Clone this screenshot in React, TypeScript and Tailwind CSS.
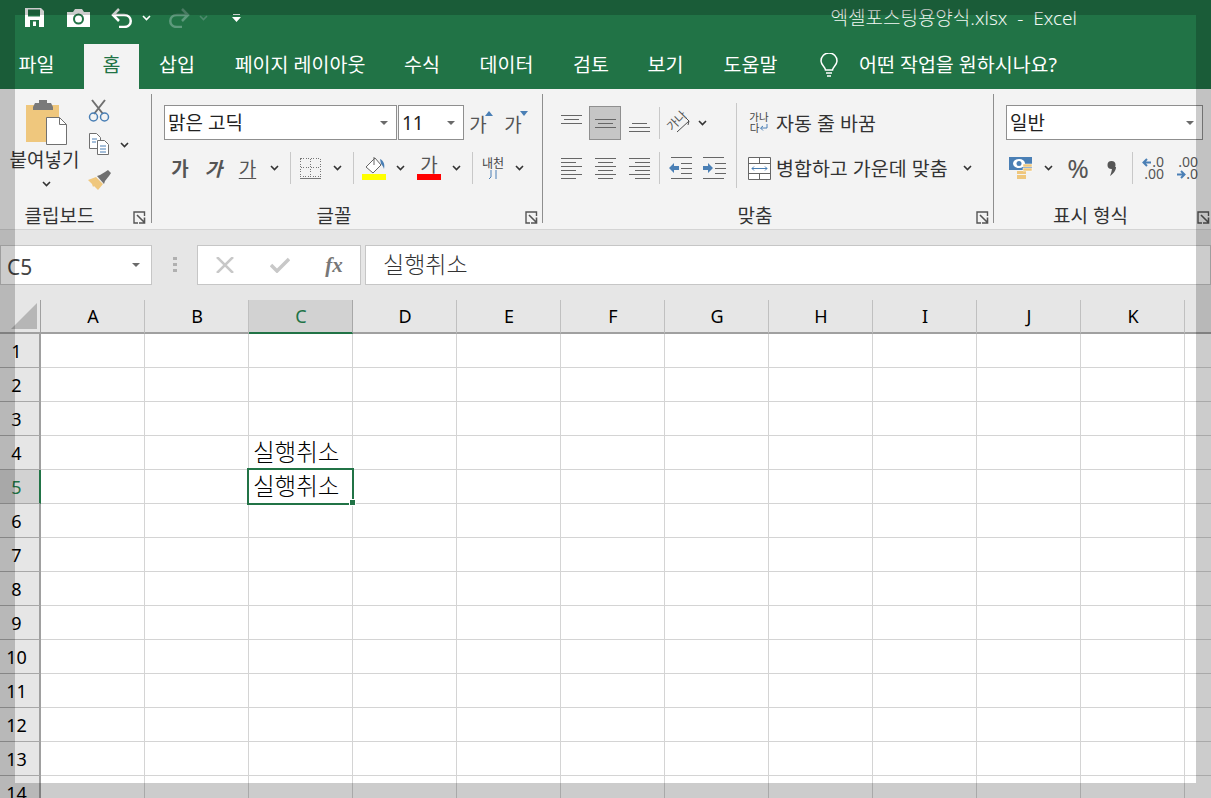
import React from "react";

const font = { fontFamily: '"Noto Sans","Noto Sans CJK KR",sans-serif' };

const Chev = ({ c = "#333" }: { c?: string }) => (
  <svg width="9" height="6" viewBox="0 0 9 6" fill="none" stroke={c} strokeWidth="1.600">
    <path d="M1 1l3.500 3.500L8 1" />
  </svg>
);
const Caret = () => (
  <svg width="8" height="4" viewBox="0 0 8 4" fill="#6a6a6a"><path d="M0 0h8L4 4z" /></svg>
);
const Launcher = () => (
  <svg width="13" height="13" viewBox="0 0 13 13" fill="none" stroke="#555">
    <path d="M11.500 5V1H1v11h4" strokeWidth="1.400" />
    <path d="M4 4l7 7M11.500 6.500v5.500H6" strokeWidth="1.600" />
  </svg>
);
const JustifyLines = ({ align }: { align: "l" | "c" | "r" }) => (
  <svg width="21" height="22" viewBox="0 0 21 22" stroke="#666" strokeWidth="1" shapeRendering="crispEdges">
    {[0, 1, 2, 3, 4, 5].map((i) => {
      const w = i % 2 ? 15 : 21;
      const left = align === "l" ? 0 : align === "c" ? (21 - w) / 2 : 21 - w;
      return <path key={i} d={`M${left} ${1.5 + i * 4}h${w}`} />;
    })}
  </svg>
);
const V3 = ({ h = "h-[32px]" }: { h?: string }) => <div className={`w-px ${h} bg-[#c8c8c8]`} />;

function Tab({ w, t, active }: { w: string; t: string; active?: boolean }) {
  return (
    <div
      className={`${w} h-full flex items-center justify-center text-[19.5px] whitespace-nowrap pb-[3px] ${
        active ? "bg-[#f3f3f3] text-[#217346]" : "text-white"
      }`}
    >
      {t}
    </div>
  );
}

function GroupLabel({ t, pad, launcherPos }: { t: string; pad: string; launcherPos: string }) {
  return (
    <div className={`relative h-[20px] mt-auto mb-[3px] flex items-center justify-center text-[19px] text-[#333] whitespace-nowrap ${pad}`}>
      {t}
      <span className={`absolute top-[5px] flex ${launcherPos}`}>
        <Launcher />
      </span>
    </div>
  );
}

const Sep = () => <div className="w-px h-[129px] mt-[5px] bg-[#8e8e8e] shrink-0" />;

function Select({ w, t }: { w: string; t: string }) {
  return (
    <div className={`${w} h-[35px] bg-white border border-[#8f8f8f] flex items-center justify-between pl-[3px] pr-[8px] text-[19px] text-[#222]`}>
      <span className="pt-[2px]">{t}</span>
      <Caret />
    </div>
  );
}

const Ga = ({ cls = "" }: { cls?: string }) => (
  <span className={`text-[19px] leading-none text-[#555] pt-[2px] ${cls}`}>가</span>
);

function Clipboard() {
  return (
    <div className="w-[151px] shrink-0 flex flex-col h-full">
      <div className="flex">
        <div className="w-[88px] flex flex-col items-center pt-[11px] pl-[1px]">
          <svg className="ml-[5px]" width="42" height="46" viewBox="0 0 42 46">
            <path d="M0 5h33v37H0z" fill="#efc77d" />
            <path d="M7 7l2-4h4V0h8v3h4l2 4v3H7z" fill="#7a7a7a" />
            <path d="M20.500 17.500h13l7 7V44.500H20.500z" fill="#fff" stroke="#707070" />
            <path d="M33.500 17.500v7h7" fill="none" stroke="#707070" />
          </svg>
          <div className="text-[19px] leading-none mt-[5px] whitespace-nowrap text-[#333]">붙여넣기</div>
          <div className="mt-[11px] ml-[3px] flex"><Chev /></div>
        </div>
        <div className="flex flex-col pt-[10px]">
          <svg width="22" height="24" viewBox="0 0 22 24" fill="none">
            <path d="M4 1l11 14M17 1L6 15" stroke="#707070" strokeWidth="2" />
            <circle cx="5.500" cy="18" r="4" stroke="#4a7fb5" strokeWidth="1.500" />
            <circle cx="16.500" cy="18" r="4" stroke="#4a7fb5" strokeWidth="1.500" />
          </svg>
          <div className="flex items-center mt-[10px]">
            <svg width="22" height="23" viewBox="0 0 22 23" fill="#fff" stroke="#707070">
              <path d="M1.500.500h7l4 4v11h-11z" />
              <path d="M9.500 7.500h7l4 4v10h-11z" />
              <path d="M4 6h5M4 9h4M12 13h6M12 16h6M12 19h6" stroke="#4a7fb5" />
            </svg>
            <span className="ml-[10px] flex"><Chev /></span>
          </div>
          <svg className="mt-[14px]" width="24" height="21" viewBox="0 0 24 21">
            <path d="M0 10l8-3 7 7-5 6-4-4-1 1-1-3z" fill="#efc77d" />
            <path d="M9 6l3-1 5-3 3-2 3 3-2 3-4 5-1 3z" fill="#707070" />
          </svg>
        </div>
      </div>
      <GroupLabel t="클립보드" pad="pr-[32px]" launcherPos="right-[5px]" />
    </div>
  );
}

function FontGroup() {
  return (
    <div className="w-[390px] shrink-0 flex flex-col h-full pt-[16px]">
      <div className="flex items-center h-[35px] pl-[12px]">
        <Select w="w-[233px]" t="맑은 고딕" />
        <div className="ml-px"><Select w="w-[66px]" t="11" /></div>
        <div className="w-[30px] h-[35px] flex items-center justify-center relative pr-[2px] pt-[3px]">
          <Ga />
          <svg className="absolute right-[1px] top-[6px]" width="8" height="5"><path d="M0 5L4 0l4 5z" fill="#4a7fb5" /></svg>
        </div>
        <div className="w-[40px] h-[35px] flex items-center justify-center relative pr-[2px] pt-[3px]">
          <Ga />
          <svg className="absolute right-[6px] top-[6px]" width="8" height="5"><path d="M0 0l4 5 4-5z" fill="#4a7fb5" /></svg>
        </div>
      </div>
      <div className="flex items-center h-[34px] mt-[11px] pl-[12px]">
        <div className="w-[32px] flex justify-center"><Ga cls="font-semibold" /></div>
        <div className="w-[35px] flex justify-center"><Ga cls="font-semibold italic" /></div>
        <div className="w-[33px] flex justify-center"><Ga cls="font-normal underline underline-offset-2" /></div>
        <div className="w-[20px] flex justify-center"><Chev /></div>
        <div className="w-[12px] flex justify-center"><V3 /></div>
        <div className="w-[30px] flex justify-center">
          <svg width="22" height="21" viewBox="0 0 22 21" fill="none" stroke="#777" shapeRendering="crispEdges">
            <path d="M.500.500h20v18h-20zM10.500.500v18M.500 9.500h20" strokeDasharray="1 1.500" />
            <path d="M0 20.500h21" />
          </svg>
        </div>
        <div className="w-[22px] flex justify-center"><Chev /></div>
        <div className="w-[10px] flex justify-center"><V3 /></div>
        <div className="w-[32px] flex justify-center">
          <svg width="24" height="24" viewBox="0 0 24 24">
            <path d="M4 11l9-9 6 7-8 8z" fill="#fff" stroke="#666" />
            <path d="M12 1v8" stroke="#666" />
            <path d="M18 3c4 2 5 6 4 10-1-3-2-4-3-5z" fill="#4a7fb5" />
            <path d="M0 18h24v6H0z" fill="#ffff00" />
          </svg>
        </div>
        <div className="w-[20px] flex justify-center"><Chev /></div>
        <div className="w-[38px] flex flex-col items-center">
          <span className="text-[19px] leading-[18px] text-[#555]">가</span>
          <div className="w-[24px] h-[6px] bg-[#ff0000]" />
        </div>
        <div className="w-[16px] flex justify-center"><Chev /></div>
        <div className="w-[16px] flex justify-center"><V3 /></div>
        <div className="w-[26px] flex flex-col items-center leading-none text-[#444]">
          <span className="text-[12px] whitespace-nowrap">내천</span>
          <svg width="10" height="9" viewBox="0 0 10 9" stroke="#4a7fb5" fill="none"><path d="M3 0v7l-2 2M8 0v9" /></svg>
        </div>
        <div className="w-[26px] flex justify-center"><Chev /></div>
      </div>
      <GroupLabel t="글꼴" pad="pr-[26px]" launcherPos="right-[4px]" />
    </div>
  );
}

function AlignGroup() {
  return (
    <div className="w-[450px] shrink-0 flex flex-col h-full pt-[16px]">
      <div className="flex h-[85px] pl-[12px]">
        <div className="flex flex-col">
          <div className="flex items-center h-[35px]">
            <div className="w-[32px] flex justify-center pb-[7px]">
              <svg width="21" height="9" stroke="#666" shapeRendering="crispEdges"><path d="M0 .5h21M3 4.500h15M0 8.500h21" /></svg>
            </div>
            <div className="w-[32px] h-[34px] mt-px ml-[2px] bg-[#c6c6c6] border border-[#8f8f8f] flex items-center justify-center">
              <svg width="21" height="9" stroke="#666" shapeRendering="crispEdges"><path d="M0 .5h21M3 4.500h15M0 8.500h21" /></svg>
            </div>
            <div className="w-[32px] ml-[2px] flex justify-center pt-[9px]">
              <svg width="21" height="9" stroke="#666" shapeRendering="crispEdges"><path d="M3 .5h15M0 4.500h21M0 8.500h21" /></svg>
            </div>
            <div className="w-[8px] flex justify-center"><V3 /></div>
            <div className="w-[32px] flex justify-center">
              <div className="relative w-[24px] h-[24px]">
                <span className="absolute left-[-1px] top-[4px] text-[12px] leading-none text-[#555] -rotate-45 whitespace-nowrap">가나</span>
                <svg className="absolute left-0 top-0" width="24" height="24" fill="none" stroke="#4d4d4d"><path d="M10 21l12-11M19 7l3 3-1 4" /></svg>
              </div>
            </div>
            <div className="w-[14px] flex justify-center"><Chev /></div>
          </div>
          <div className="flex items-center h-[34px] mt-[11px]">
            <div className="w-[32px] flex justify-center"><JustifyLines align="l" /></div>
            <div className="w-[32px] ml-[2px] flex justify-center"><JustifyLines align="c" /></div>
            <div className="w-[32px] ml-[2px] flex justify-center"><JustifyLines align="r" /></div>
            <div className="w-[8px] flex justify-center"><V3 /></div>
            <div className="w-[32px] ml-px flex justify-center">
              <svg width="23" height="22" viewBox="0 0 23 22">
                <path d="M2 .5h21M12 6.500h11M12 11.500h11M12 16.500h11M2 21.500h21" stroke="#666" />
                <path d="M0 11l5-5v3h5v4H5v3z" fill="#4a7fb5" />
              </svg>
            </div>
            <div className="w-[32px] ml-[2px] flex justify-center">
              <svg width="23" height="22" viewBox="0 0 23 22">
                <path d="M0 .5h21M12 6.500h11M12 11.500h11M12 16.500h11M0 21.500h21" stroke="#666" />
                <path d="M10 11L5 6v3H0v4h5v3z" fill="#4a7fb5" />
              </svg>
            </div>
          </div>
        </div>
        <div className="ml-[6px] w-px h-[85px] mt-[-2px] bg-[#c8c8c8] shrink-0" />
        <div className="flex flex-col ml-[8px]">
          <div className="flex items-center h-[35px]">
            <div className="w-[28px] flex flex-col items-center leading-none text-[#444]">
              <span className="text-[10.500px] leading-[11px] whitespace-nowrap">가나</span>
              <span className="flex items-center text-[10.500px] leading-[10px] whitespace-nowrap">다
                <svg width="9" height="8" fill="none" stroke="#4a7fb5"><path d="M8 0v4H2M4 2L1.500 4 4 6.500" /></svg>
              </span>
            </div>
            <span className="ml-[3px] pt-[2px] text-[19.5px] whitespace-nowrap text-[#333]">자동 줄 바꿈</span>
          </div>
          <div className="flex items-center h-[34px] mt-[11px]">
            <div className="w-[28px] flex justify-center">
              <svg width="23" height="23" viewBox="0 0 23 23" fill="none">
                <path d="M.5.5h22v22H.5z" fill="#fff" stroke="#666" />
                <path d="M.5 6.500h22M.5 16.500h22M11.500.5v6M11.500 16.500v6" stroke="#666" />
                <path d="M4 11.500h15M6 9.500l-2 2 2 2M17 9.500l2 2-2 2" stroke="#4a7fb5" />
              </svg>
            </div>
            <span className="ml-[3px] pt-[2px] text-[19.5px] whitespace-nowrap text-[#333]">병합하고 가운데 맞춤</span>
            <span className="ml-[15px] flex"><Chev /></span>
          </div>
        </div>
      </div>
      <GroupLabel t="맞춤" pad="pr-[26px]" launcherPos="right-[4px]" />
    </div>
  );
}

function NumberGroup() {
  return (
    <div className="flex-1 flex flex-col h-full pt-[16px]">
      <div className="h-[35px] pl-[12px]"><Select w="w-[197px]" t="일반" /></div>
      <div className="flex items-center h-[34px] mt-[11px] pl-[10px]">
        <div className="w-[34px] flex justify-center">
          <svg width="24" height="23" viewBox="0 0 24 23">
            <path d="M0 0h23v13H0z" fill="#4a7fb5" />
            <ellipse cx="10" cy="6.500" rx="6" ry="4.500" fill="#fff" />
            <circle cx="10" cy="6.500" r="2.500" fill="#4a7fb5" />
            <path d="M8 14h9v3H8zM8 18h9v4H8z" fill="#efc77d" />
            <path d="M14 7h9v3h-9zM14 11h9v3h-9z" fill="#efc77d" stroke="#fff" strokeWidth=".5" />
          </svg>
        </div>
        <div className="w-[20px] flex justify-center"><Chev /></div>
        <div className="w-[40px] flex justify-center text-[26px] leading-none text-[#555]">%</div>
        <div className="w-[26px] flex justify-center">
          <svg width="9" height="15" viewBox="0 0 9 15" fill="#555">
            <circle cx="4.500" cy="4" r="4" />
            <path d="M5 6h4c0 4-3 7-6 9 1-3 2-5 2-9z" />
          </svg>
        </div>
        <div className="w-[16px] flex justify-center"><V3 /></div>
        <div className="w-[24px] flex flex-col items-end leading-[12px] text-[14px] text-[#555] whitespace-nowrap">
          <span className="flex items-center">
            <svg width="10" height="9" fill="none" stroke="#4a7fb5" strokeWidth="2"><path d="M9 4.500H2M5 1L1.500 4.500 5 8" /></svg>
            .0
          </span>
          <span>.00</span>
        </div>
        <div className="w-[24px] ml-[10px] flex flex-col items-end leading-[12px] text-[14px] text-[#555] whitespace-nowrap">
          <span>.00</span>
          <span className="flex items-center">
            <svg width="10" height="9" fill="none" stroke="#4a7fb5" strokeWidth="2"><path d="M1 4.500h7M5 1l3.500 3.500L5 8" /></svg>
            .0
          </span>
        </div>
      </div>
      <GroupLabel t="표시 형식" pad="pr-[24px]" launcherPos="right-[1px]" />
    </div>
  );
}

function TitleBar() {
  return (
    <div className="h-[44px] flex items-center justify-between bg-[#217346] text-white pb-[9px]">
      <div className="flex items-center">
        <svg className="ml-[25px]" width="19" height="19" viewBox="0 0 19 19" fill="#fff">
          <path d="M0 0h16l3 3v16H0z" />
          <path d="M3 1.500h12v7H3z" fill="#217346" />
          <path d="M5 12h9v7H5z" fill="#217346" />
          <path d="M8 13.500h3V18H8z" fill="#fff" />
        </svg>
        <svg className="ml-[23px]" width="23" height="18" viewBox="0 0 23 18" fill="#fff">
          <path d="M0 3h6l2-3h7l2 3h6v15H0z" />
          <circle cx="11.500" cy="10" r="4.500" fill="none" stroke="#217346" strokeWidth="2" />
        </svg>
        <svg className="ml-[21px]" width="22" height="20" viewBox="0 0 22 20" fill="none" stroke="#fff" strokeWidth="2.500">
          <path d="M8 1L2 7l6 6M2 7h11c9 0 9 12 0 12H8" />
        </svg>
        <span className="ml-[9px] flex"><Chev c="#fff" /></span>
        <svg className="ml-[17px]" width="22" height="20" viewBox="0 0 22 20" fill="none" stroke="#5d9a7c" strokeWidth="2.500">
          <path d="M14 1l6 6-6 6M20 7H9c-9 0-9 12 0 12h5" />
        </svg>
        <span className="ml-[9px] flex"><Chev c="#4c8a6c" /></span>
        <svg className="ml-[24px]" width="9" height="8" viewBox="0 0 9 8" fill="#fff">
          <path d="M1 0h7v1H1zM0 3h9L4.500 8z" />
        </svg>
      </div>
      <div className="text-[19px] font-light whitespace-pre mr-[134px] mt-[2px] text-[#f2f7f4]">엑셀포스팅용양식.xlsx  -  Excel</div>
    </div>
  );
}

function Tabs() {
  return (
    <div className="h-[45px] flex bg-[#217346]">
      <Tab w="w-[73px]" t="파일" />
      <div className="ml-[11px] h-full flex"><Tab w="w-[55px]" t="홈" active /></div>
      <Tab w="w-[76px]" t="삽입" />
      <Tab w="w-[170px]" t="페이지 레이아웃" />
      <Tab w="w-[74px]" t="수식" />
      <Tab w="w-[95px]" t="데이터" />
      <Tab w="w-[74px]" t="검토" />
      <Tab w="w-[75px]" t="보기" />
      <Tab w="w-[95px]" t="도움말" />
      <div className="ml-[22px] h-full flex items-center pb-[3px]">
        <svg width="18" height="25" viewBox="0 0 18 25" fill="none" stroke="#fff" strokeWidth="1.500">
          <path d="M5.500 17c0-3-4.500-5-4.500-9a8 8 0 0 1 16 0c0 4-4.500 6-4.500 9z" />
          <path d="M6 20h6M7 23h4" />
        </svg>
      </div>
      <div className="ml-[21px] h-full flex items-center text-white text-[19.5px] whitespace-nowrap pb-[3px]">어떤 작업을 원하시나요?</div>
    </div>
  );
}

function FormulaBar() {
  return (
    <div className="h-[70px] bg-[#e6e6e6] flex pt-[15px] shrink-0">
      <div className="w-[152px] h-[40px] bg-white border border-[#c6c6c6] flex items-center justify-between pl-[6px] pr-[11px] text-[21px] text-[#444]">
        <span className="pt-[5px]">C5</span>
        <Caret />
      </div>
      <div className="w-[45px] h-[40px] flex items-center justify-center">
        <svg width="4" height="16" fill="#b0b0b0"><path d="M0 0h4v3H0zM0 6h4v3H0zM0 12h4v3H0z" /></svg>
      </div>
      <div className="w-[164px] h-[40px] bg-white border border-[#c6c6c6] flex items-center">
        <div className="w-[54px] flex justify-center">
          <svg width="18" height="16" fill="none" stroke="#c8c8c8" strokeWidth="2.500"><path d="M1 0l16 16M17 0L1 16" /></svg>
        </div>
        <div className="w-[56px] flex justify-center">
          <svg width="20" height="16" fill="none" stroke="#c8c8c8" strokeWidth="3.500"><path d="M1 8l6 6L19 2" /></svg>
        </div>
        <div className="w-[52px] flex justify-center">
          <span className="text-[21px] leading-none italic font-bold text-[#777]" style={{ fontFamily: '"Liberation Serif",serif' }}>fx</span>
        </div>
      </div>
      <div className="ml-[4px] flex-1 h-[40px] bg-white border border-[#c6c6c6] flex items-center pl-[17px] pb-[2px] text-[23px] font-light text-[#333]">실행취소</div>
    </div>
  );
}

const COLS = ["A", "B", "C", "D", "E", "F", "G", "H", "I", "J", "K", "L"];
const ROWS = [1, 2, 3, 4, 5, 6, 7, 8, 9, 10, 11, 12, 13, 14];

function Sheet() {
  return (
    <div className="relative flex-1 overflow-hidden bg-white">
      <div className="grid grid-cols-[41px_repeat(12,104px)] grid-rows-[34px_repeat(14,34px)]">
        <div className="bg-[#e6e6e6] border-r border-b-2 border-[#a0a0a0] flex items-end justify-end pr-[3px] pb-[3px]">
          <svg width="26" height="26"><path d="M0 26L26 0v26z" fill="#b6b6b6" /></svg>
        </div>
        {COLS.map((c) => (
          <div
            key={c}
            className={`flex items-center justify-center text-[18px] border-r border-b-2 pl-px ${
              c === "C"
                ? "bg-[#d2d2d2] text-[#217346] border-b-[#217346] border-r-[#a8a8a8]"
                : "bg-[#e6e6e6] text-black border-r-[#c0c0c0] border-b-[#a0a0a0]"
            }`}
          >
            {c}
          </div>
        ))}
        {ROWS.map((r) => (
          <React.Fragment key={r}>
            <div
              className={`flex items-center justify-center pr-[6px] pt-[2px] text-[18px] border-b border-b-[#a8a8a8] ${
                r === 5
                  ? "bg-[#d2d2d2] text-[#217346] border-r-2 border-r-[#217346]"
                  : "bg-[#e6e6e6] text-black border-r-2 border-r-[#a0a0a0]"
              }`}
            >
              {r}
            </div>
            {COLS.map((c) => (
              <div
                key={c}
                className="border-r border-b border-[#d4d4d4] flex items-center pl-[4px] text-[23.5px] leading-none font-light text-black whitespace-nowrap"
              >
                {c === "C" && (r === 4 || r === 5) ? "실행취소" : ""}
              </div>
            ))}
          </React.Fragment>
        ))}
      </div>
      <div className="absolute left-[247px] top-[168px] w-[107px] h-[37px] border-2 border-[#217346]" />
      <div className="absolute left-[349px] top-[199px] w-[7px] h-[7px] bg-[#217346] border border-white" />
    </div>
  );
}

export default function App() {
  return (
    <div className="relative w-[1211px] h-[798px] overflow-hidden flex flex-col" style={font}>
      <TitleBar />
      <Tabs />
      <div className="h-[141px] bg-[#f3f3f3] border-b border-[#d4d4d4] flex shrink-0">
        <Clipboard />
        <Sep />
        <FontGroup />
        <Sep />
        <AlignGroup />
        <Sep />
        <NumberGroup />
      </div>
      <FormulaBar />
      <Sheet />
      <div className="absolute inset-0 border-[15px] border-black/20 pointer-events-none" />
    </div>
  );
}
